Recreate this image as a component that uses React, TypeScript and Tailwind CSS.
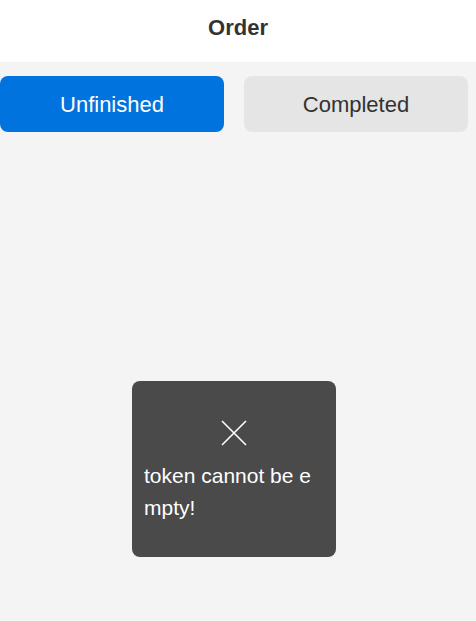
export default function App() {
  return (
    <div className="min-h-screen bg-[#f4f4f4] font-['Liberation_Sans',Arial,sans-serif]">
      <div className="flex h-[62px] items-center justify-center bg-white pb-[8px]">
        <h1 className="text-[22px] font-bold text-[#333]">Order</h1>
      </div>
      <div className="flex w-[468px] gap-[20px] pt-[14px]">
        <button className="flex h-[56px] flex-1 items-center justify-center rounded-[8px] bg-[#0073de] text-[22px] text-white">
          Unfinished
        </button>
        <button className="flex h-[56px] flex-1 items-center justify-center rounded-[8px] bg-[#e5e5e5] text-[22px] text-[#333]">
          Completed
        </button>
      </div>
      <div className="fixed left-[132px] top-[381px] flex h-[176px] w-[204px] flex-col items-center rounded-[8px] bg-[#4a4a4a] px-[12px] pt-[39px]">
        <svg width="26" height="26" viewBox="0 0 26 26" className="text-white">
          <path d="M1 1L25 25M25 1L1 25" stroke="currentColor" strokeWidth="1.6" fill="none" />
        </svg>
        <p className="mt-[14px] w-full break-all text-[21px] leading-[32px] text-white">
          token cannot be empty!
        </p>
      </div>
    </div>
  );
}
